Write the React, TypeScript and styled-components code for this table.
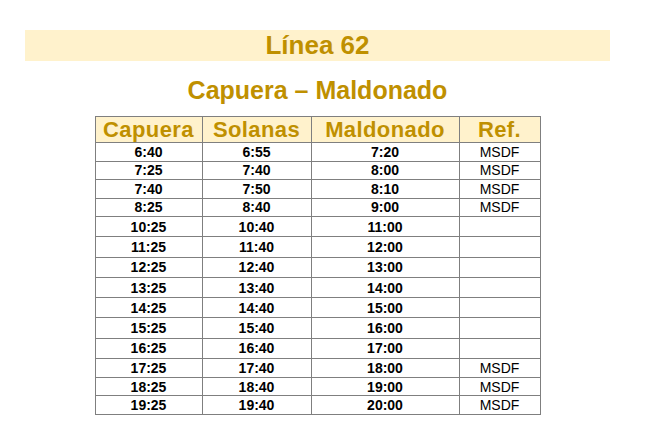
import styled, { createGlobalStyle } from 'styled-components';

const GlobalStyle = createGlobalStyle`
  html, body {
    margin: 0;
    padding: 0;
    background: #ffffff;
    font-family: "Liberation Sans", Arial, sans-serif;
  }
`;

const gold = '#bf9000';
const cream = '#fff2cc';
const line = '#7f7f7f';

const Page = styled.div`
  width: 585px;
  margin-left: 25px;
  padding-top: 30px;
  display: flex;
  flex-direction: column;
  align-items: center;
`;

const Banner = styled.div`
  align-self: stretch;
  height: 31px;
  background: ${cream};
  color: ${gold};
  font-weight: bold;
  font-size: 26px;
  line-height: 31px;
  text-align: center;
`;

const Route = styled.h2`
  margin: 14px 0 0;
  color: ${gold};
  font-size: 25px;
  line-height: 30px;
  font-weight: bold;
`;

const Table = styled.table`
  margin-top: 11px;
  width: 445px;
  border-collapse: collapse;
  table-layout: fixed;
`;

const HeadCell = styled.th`
  background: ${cream};
  color: ${gold};
  font-size: 22px;
  letter-spacing: 0.4px;
  font-weight: bold;
  height: 25px;
  padding: 0;
  line-height: 25px;
  border: 1px solid ${line};
  text-align: center;
`;

const Cell = styled.td<{ $h: number; $plain?: boolean }>`
  height: ${({ $h }) => $h}px;
  padding: 0;
  border: 1px solid ${line};
  text-align: center;
  vertical-align: middle;
  font-size: 14px;
  line-height: 14px;
  font-weight: ${({ $plain }) => ($plain ? 'normal' : 'bold')};
  color: #000;
`;

const cols = [107, 109, 148, 81];
const heads = ['Capuera', 'Solanas', 'Maldonado', 'Ref.'];

const rows: [string, string, string, string, number][] = [
  ['6:40', '6:55', '7:20', 'MSDF', 17.5],
  ['7:25', '7:40', '8:00', 'MSDF', 17.5],
  ['7:40', '7:50', '8:10', 'MSDF', 17.5],
  ['8:25', '8:40', '9:00', 'MSDF', 17.5],
  ['10:25', '10:40', '11:00', '', 19.3],
  ['11:25', '11:40', '12:00', '', 19.3],
  ['12:25', '12:40', '13:00', '', 19.3],
  ['13:25', '13:40', '14:00', '', 19.3],
  ['14:25', '14:40', '15:00', '', 19.3],
  ['15:25', '15:40', '16:00', '', 19.3],
  ['16:25', '16:40', '17:00', '', 19.3],
  ['17:25', '17:40', '18:00', 'MSDF', 17.7],
  ['18:25', '18:40', '19:00', 'MSDF', 17.7],
  ['19:25', '19:40', '20:00', 'MSDF', 17.7],
];

export default function App() {
  return (
    <>
      <GlobalStyle />
      <Page>
        <Banner>Línea 62</Banner>
        <Route>Capuera – Maldonado</Route>
        <Table>
          <colgroup>
            {cols.map((w, i) => (
              <col key={i} style={{ width: w }} />
            ))}
          </colgroup>
          <thead>
            <tr>
              {heads.map((h) => (
                <HeadCell key={h}>{h}</HeadCell>
              ))}
            </tr>
          </thead>
          <tbody>
            {rows.map(([a, b, c, ref, h]) => (
              <tr key={a}>
                <Cell $h={h}>{a}</Cell>
                <Cell $h={h}>{b}</Cell>
                <Cell $h={h}>{c}</Cell>
                <Cell $h={h} $plain>
                  {ref}
                </Cell>
              </tr>
            ))}
          </tbody>
        </Table>
      </Page>
    </>
  );
}
